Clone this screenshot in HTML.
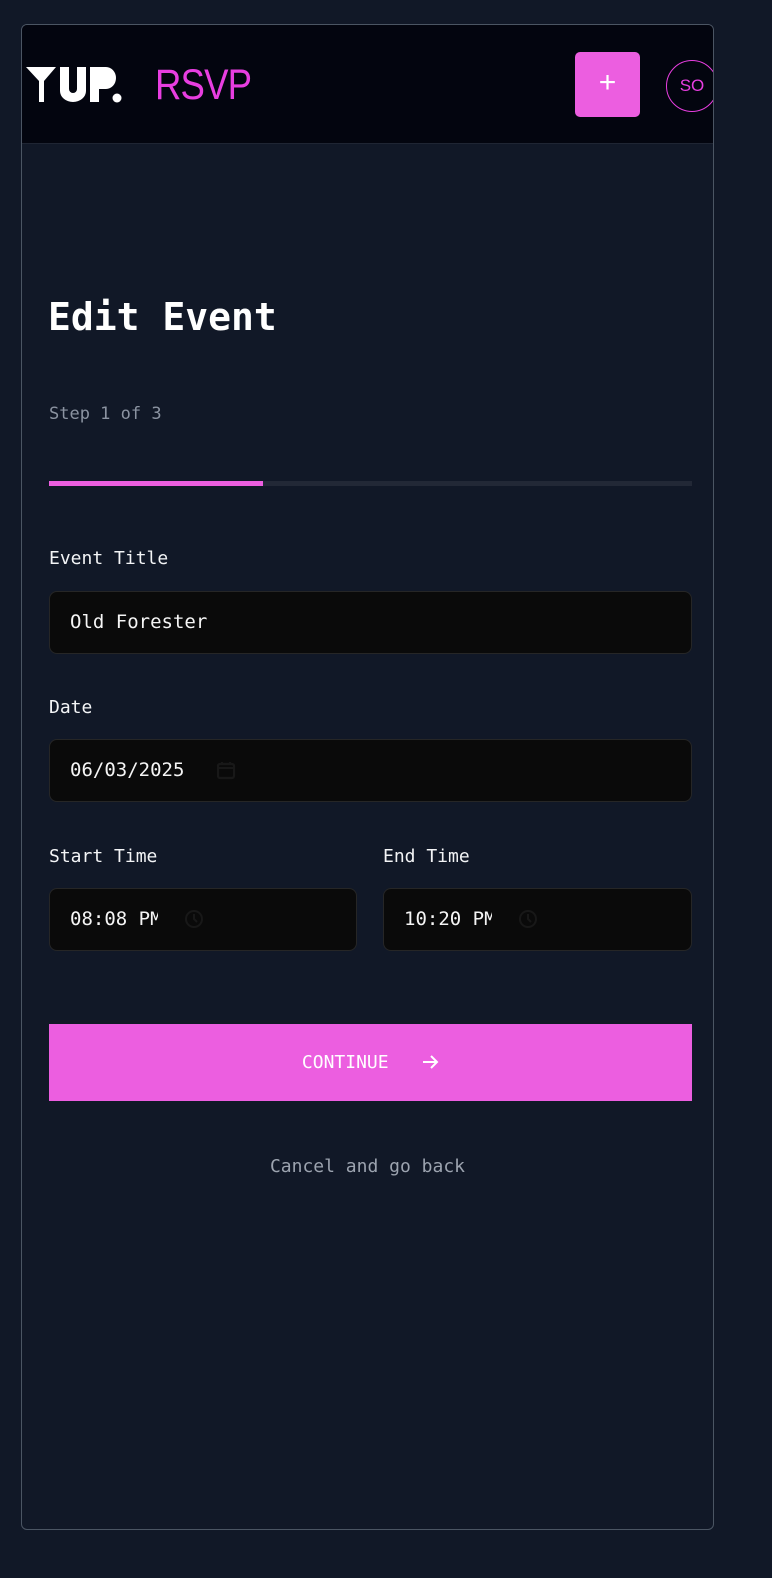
<!DOCTYPE html>
<html><head><style>
*{box-sizing:border-box;margin:0;padding:0}
body{width:772px;height:1578px;background:#111827;font-family:"DejaVu Sans Mono","Liberation Mono",monospace;color:#fff;position:relative;overflow:hidden}
.card{position:absolute;left:21px;top:24px;width:693px;height:1506px;border:1.5px solid #4b5563;border-radius:6px;overflow:hidden;background:#111827}
.hdr{position:absolute;left:0;top:0;width:100%;height:119px;background:#03050f;border-bottom:1.5px solid #1f2533}
.abs{position:absolute}
.lbl{position:absolute;left:27px;font-size:18px;color:#f3f4f6}
.inp{position:absolute;height:63px;background:#0a0a0a;border:1.5px solid #262626;border-radius:8px;font-size:19px;padding-left:20px;line-height:60px;color:#f5f5f5}
</style></head><body>
<div class="card">
 <div class="hdr">
  <svg class="abs" style="left:4px;top:42px" width="120" height="36" viewBox="0 0 120 36">
   <path d="M0 0H30L18 14V35H13V14Z" fill="#fff"/>
   <path d="M34 0H43V22A4 4 0 0 0 51 22V0H60V24A13 11 0 0 1 34 24Z" fill="#fff"/>
   <path d="M64 0H80A10 11 0 0 1 80 22H73V35H64Z" fill="#fff"/>
   <circle cx="91" cy="31" r="4.5" fill="#fff"/>
  </svg>
  <div class="abs" style="left:133px;top:36px;font-family:'Liberation Sans',sans-serif;font-size:43px;color:#e83ee0;letter-spacing:-1px;transform:scaleX(0.85);transform-origin:left">RSVP</div>
  <div class="abs" style="left:553px;top:27px;width:65px;height:65px;background:#ec5ee0;border-radius:5px;color:#fff;font-size:30px;text-align:center;line-height:62px;font-family:'Liberation Sans',sans-serif">+</div>
  <div class="abs" style="left:644px;top:35px;width:52px;height:52px;border:1.5px solid #e83ee0;border-radius:50%;color:#e83ee0;font-size:17px;line-height:49px;text-align:center;font-family:'Liberation Sans',sans-serif">SO</div>
 </div>
 <div class="abs" style="left:26px;top:270px;font-size:38px;font-weight:bold">Edit Event</div>
 <div class="abs" style="left:27px;top:379px;font-size:17px;color:#8b93a1">Step 1 of 3</div>
 <div class="abs" style="left:27px;top:456px;width:643px;height:5px;background:#222836"></div>
 <div class="abs" style="left:27px;top:456px;width:214px;height:5px;background:#ec5ee0"></div>
 <div class="lbl" style="top:523px">Event Title</div>
 <div class="inp" style="left:27px;top:566px;width:643px">Old Forester</div>
 <div class="lbl" style="top:672px">Date</div>
 <div class="inp" style="left:27px;top:714px;width:643px">06/03/2025
  <svg class="abs" style="left:166px;top:20px" width="20" height="20" viewBox="0 0 20 20"><rect x="2" y="4" width="16" height="14" rx="2" fill="none" stroke="#181818" stroke-width="2.2"/><path d="M2 8H18M6 2V5M14 2V5" stroke="#181818" stroke-width="2"/></svg></div>
 <div class="lbl" style="top:821px">Start Time</div>
 <div class="lbl" style="top:821px;left:361px">End Time</div>
 <div class="inp" style="left:27px;top:863px;width:308px">08:08 P<span style="display:inline-block;width:8px;overflow:hidden;vertical-align:top">M</span>
  <svg class="abs" style="left:134px;top:20px" width="20" height="20" viewBox="0 0 20 20"><circle cx="10" cy="10" r="8" fill="none" stroke="#181818" stroke-width="2"/><path d="M10 5V10L13 13" fill="none" stroke="#181818" stroke-width="2"/></svg></div>
 <div class="inp" style="left:361px;top:863px;width:309px">10:20 P<span style="display:inline-block;width:8px;overflow:hidden;vertical-align:top">M</span>
  <svg class="abs" style="left:134px;top:20px" width="20" height="20" viewBox="0 0 20 20"><circle cx="10" cy="10" r="8" fill="none" stroke="#181818" stroke-width="2"/><path d="M10 5V10L13 13" fill="none" stroke="#181818" stroke-width="2"/></svg></div>
 <div class="abs" style="left:27px;top:999px;width:643px;height:77px;background:#ec5ee0;text-align:center;line-height:77px;font-size:18px;color:#fff">CONTINUE &nbsp;&nbsp;<svg width="18" height="18" viewBox="0 0 18 18" style="vertical-align:-3px"><path d="M2 9H16M10 3L16 9L10 15" fill="none" stroke="#fff" stroke-width="2"/></svg></div>
 <div class="abs" style="left:0;width:100%;top:1131px;text-align:center;font-size:18px;color:#9ca3af">Cancel and go back</div>
</div>
</body></html>
